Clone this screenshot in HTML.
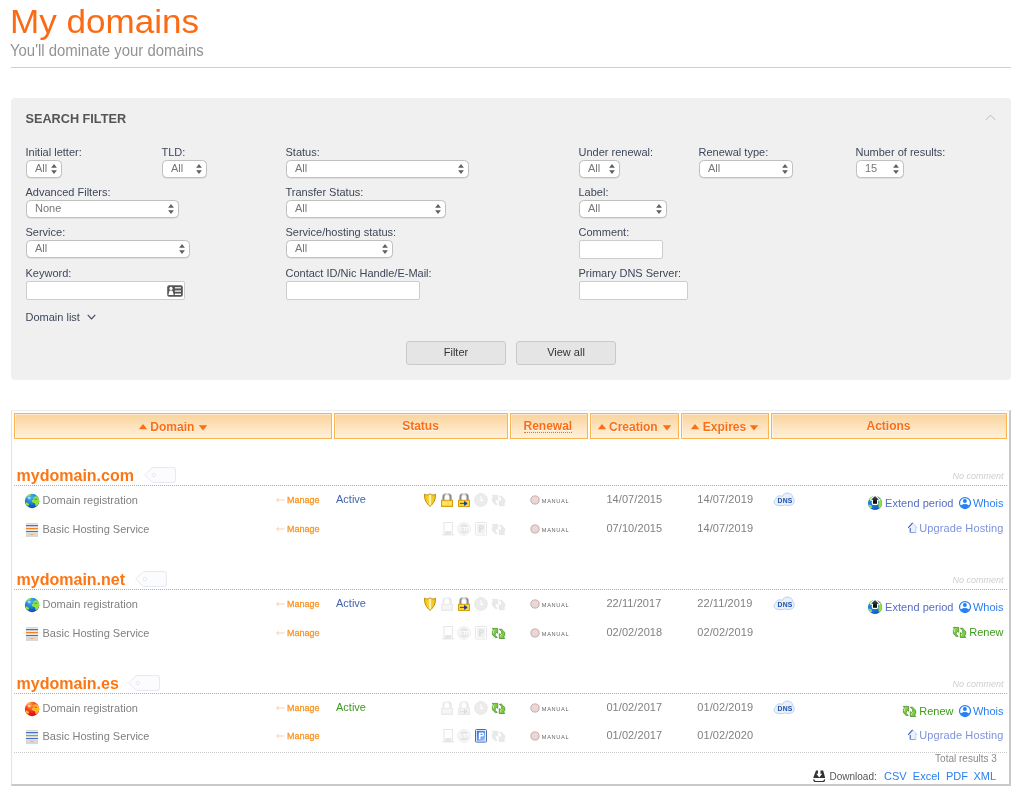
<!DOCTYPE html>
<html lang="en"><head><meta charset="utf-8"><title>My domains</title>
<style>
html,body{margin:0;padding:0;background:#fff;}
body{width:1021px;height:801px;position:relative;overflow:hidden;font-family:"Liberation Sans",sans-serif;color:#808080;}
#page{position:absolute;left:0;top:0;width:1021px;height:801px;will-change:transform;}
.t{position:absolute;white-space:nowrap;}
.abs{position:absolute;}
h2.t,h3.t,p.t{margin:0;}
em.t{font-style:italic;}
a.t{text-decoration:none;cursor:pointer;}
button.btn{padding:0 0 2px;height:20px;margin:0;box-sizing:content-box;font-family:inherit;-webkit-appearance:none;appearance:none;}
h1.t{margin:0;font-weight:normal;color:#fb6b15;}
.sub{color:#939393;}
.hr{position:absolute;left:11px;top:67px;width:1000px;height:1px;background:#cfcfcf;}
.panel{position:absolute;left:11px;top:98px;width:1000px;height:282px;background:#f0f0f0;border-radius:4px;}
.ptitle{font-weight:bold;color:#555;}
.lab{color:#3e4759;}
.sel{position:absolute;height:16px;border:1px solid #c0c0c0;border-radius:4.5px;box-shadow:0 0.5px 0.5px rgba(0,0,0,.12);background:#fff;box-sizing:content-box;}
.sel span{position:absolute;left:8px;top:1px;font-size:11px;line-height:12px;color:#777;}
.sel svg{position:absolute;right:3.8px;top:3.2px;}
.inp{position:absolute;height:17px;border:1px solid #cdcdcd;border-radius:2px;background:#fff;}
.btn{position:absolute;top:341px;width:98px;height:22px;border:1px solid #cacaca;border-radius:3px;background:#e5e5e5;color:#333;font-size:11px;line-height:20px;text-align:center;}
.tbl{position:absolute;left:11px;top:410px;width:997px;height:373px;border-top:1px solid #ececec;border-left:1px solid #e4e4e4;border-right:2px solid #c9c9c9;border-bottom:2px solid #c9c9c9;}
.th{position:absolute;top:413px;height:24px;border:1px solid #fbb451;background:linear-gradient(#fad39c,#fff1da);box-shadow:inset 1px 1px 0 rgba(255,255,255,.45);}
.tht{font-weight:bold;color:#fb6e16;text-shadow:0 1px 0 rgba(255,255,255,.85);}
.dom{font-weight:bold;color:#fc7614;}
.dot{position:absolute;left:14px;width:993px;height:0;border-top:1px dotted #f9a01e;}
.gdot{position:absolute;left:14px;width:993px;height:0;border-top:1px dotted #c8c8c8;}
.man{color:#fb9426;}
.nocom{font-style:italic;color:#cfcfcf;}
.act1{color:#566cc2;letter-spacing:0.04px;}
.act2{color:#2a80f0;}
.act3{color:#7d92dc;letter-spacing:0.12px;}
.grn{color:#3d9a1e;}
.blue{color:#4464ab;}

</style></head>
<body>
<div id="page">
<h1 class="t" style="left:10.2px;top:4.00px;font-size:34px;line-height:34px;transform-origin:0 0;transform:scaleX(1.032);">My domains</h1>
<p class="t sub" style="left:9.9px;top:43.00px;font-size:16px;line-height:16px;transform-origin:0 0;transform:scaleX(0.932);">You'll dominate your domains</p>
<div class="hr"></div>
<div class="panel"></div>
<h3 class="t ptitle" style="left:25.5px;top:113.00px;font-size:12.7px;line-height:12.7px;">SEARCH FILTER</h3>
<svg class="abs" style="left:985px;top:114px" width="11" height="7" viewBox="0 0 11 7"><path d="M0.8 6 L5.5 1.2 L10.2 6" fill="none" stroke="#bdbdbd" stroke-width="1"/></svg>
<label class="t lab" style="left:25.5px;top:147.00px;font-size:11px;line-height:11px;">Initial letter:</label>
<div class="sel" style="left:26px;top:160px;width:34px;"><span>All</span><svg width="6" height="10" viewBox="0 0 6 10"><path d="M3 0 L5.9 3.8 H0.1 Z M3 10 L5.9 6.2 H0.1 Z" fill="#606060"/></svg></div>
<label class="t lab" style="left:161.5px;top:147.00px;font-size:11px;line-height:11px;">TLD:</label>
<div class="sel" style="left:162px;top:160px;width:43px;"><span>All</span><svg width="6" height="10" viewBox="0 0 6 10"><path d="M3 0 L5.9 3.8 H0.1 Z M3 10 L5.9 6.2 H0.1 Z" fill="#606060"/></svg></div>
<label class="t lab" style="left:285.5px;top:147.00px;font-size:11px;line-height:11px;">Status:</label>
<div class="sel" style="left:286px;top:160px;width:181px;"><span>All</span><svg width="6" height="10" viewBox="0 0 6 10"><path d="M3 0 L5.9 3.8 H0.1 Z M3 10 L5.9 6.2 H0.1 Z" fill="#606060"/></svg></div>
<label class="t lab" style="left:578.5px;top:147.00px;font-size:11px;line-height:11px;">Under renewal:</label>
<div class="sel" style="left:579px;top:160px;width:39px;"><span>All</span><svg width="6" height="10" viewBox="0 0 6 10"><path d="M3 0 L5.9 3.8 H0.1 Z M3 10 L5.9 6.2 H0.1 Z" fill="#606060"/></svg></div>
<label class="t lab" style="left:698.5px;top:147.00px;font-size:11px;line-height:11px;">Renewal type:</label>
<div class="sel" style="left:699px;top:160px;width:92px;"><span>All</span><svg width="6" height="10" viewBox="0 0 6 10"><path d="M3 0 L5.9 3.8 H0.1 Z M3 10 L5.9 6.2 H0.1 Z" fill="#606060"/></svg></div>
<label class="t lab" style="left:855.5px;top:147.00px;font-size:11px;line-height:11px;">Number of results:</label>
<div class="sel" style="left:856px;top:160px;width:46px;"><span>15</span><svg width="6" height="10" viewBox="0 0 6 10"><path d="M3 0 L5.9 3.8 H0.1 Z M3 10 L5.9 6.2 H0.1 Z" fill="#606060"/></svg></div>
<label class="t lab" style="left:25.5px;top:187.00px;font-size:11px;line-height:11px;">Advanced Filters:</label>
<div class="sel" style="left:26px;top:200px;width:151px;"><span>None</span><svg width="6" height="10" viewBox="0 0 6 10"><path d="M3 0 L5.9 3.8 H0.1 Z M3 10 L5.9 6.2 H0.1 Z" fill="#606060"/></svg></div>
<label class="t lab" style="left:285.5px;top:187.00px;font-size:11px;line-height:11px;">Transfer Status:</label>
<div class="sel" style="left:286px;top:200px;width:158px;"><span>All</span><svg width="6" height="10" viewBox="0 0 6 10"><path d="M3 0 L5.9 3.8 H0.1 Z M3 10 L5.9 6.2 H0.1 Z" fill="#606060"/></svg></div>
<label class="t lab" style="left:578.5px;top:187.00px;font-size:11px;line-height:11px;">Label:</label>
<div class="sel" style="left:579px;top:200px;width:86px;"><span>All</span><svg width="6" height="10" viewBox="0 0 6 10"><path d="M3 0 L5.9 3.8 H0.1 Z M3 10 L5.9 6.2 H0.1 Z" fill="#606060"/></svg></div>
<label class="t lab" style="left:25.5px;top:227.00px;font-size:11px;line-height:11px;">Service:</label>
<div class="sel" style="left:26px;top:240px;width:162px;"><span>All</span><svg width="6" height="10" viewBox="0 0 6 10"><path d="M3 0 L5.9 3.8 H0.1 Z M3 10 L5.9 6.2 H0.1 Z" fill="#606060"/></svg></div>
<label class="t lab" style="left:285.5px;top:227.00px;font-size:11px;line-height:11px;">Service/hosting status:</label>
<div class="sel" style="left:286px;top:240px;width:105px;"><span>All</span><svg width="6" height="10" viewBox="0 0 6 10"><path d="M3 0 L5.9 3.8 H0.1 Z M3 10 L5.9 6.2 H0.1 Z" fill="#606060"/></svg></div>
<label class="t lab" style="left:578.5px;top:227.00px;font-size:11px;line-height:11px;">Comment:</label>
<div class="inp" style="left:579px;top:240px;width:82px;"></div>
<label class="t lab" style="left:25.5px;top:268.00px;font-size:11px;line-height:11px;">Keyword:</label>
<div class="inp" style="left:26px;top:281px;width:157px;"></div>
<label class="t lab" style="left:285.5px;top:268.00px;font-size:11px;line-height:11px;">Contact ID/Nic Handle/E-Mail:</label>
<div class="inp" style="left:286px;top:281px;width:132px;"></div>
<label class="t lab" style="left:578.5px;top:268.00px;font-size:11px;line-height:11px;">Primary DNS Server:</label>
<div class="inp" style="left:579px;top:281px;width:107px;"></div>
<svg class="abs" style="left:167px;top:285px" width="16" height="12" viewBox="0 0 16 12"><rect x="0.2" y="0.2" width="15.6" height="11.6" rx="2" fill="#555"/><rect x="7.9" y="2.2" width="6.1" height="1.2" fill="#fff"/><rect x="7.9" y="5.2" width="6.1" height="1.8" fill="#cfcfcf"/><rect x="7.9" y="8.6" width="6.1" height="1.4" fill="#fff"/><circle cx="4" cy="3.4" r="1.6" fill="#fff"/><path d="M1.4 9.9 L2.2 6.4 Q2.4 5.4 3.4 5.4 H4.6 Q5.6 5.4 5.8 6.4 L6.7 9.9 Z" fill="#fff"/></svg>
<label class="t lab" style="left:25.5px;top:312.00px;font-size:11px;line-height:11px;">Domain list</label>
<svg class="abs" style="left:87px;top:314px" width="9" height="6" viewBox="0 0 9 6"><path d="M0.7 0.8 L4.5 4.9 L8.3 0.8" fill="none" stroke="#3e4759" stroke-width="1.1"/></svg>
<button type="button" class="btn" style="left:406px;">Filter</button>
<button type="button" class="btn" style="left:516px;">View all</button>
<div class="tbl"></div>
<div class="th" style="left:14px;width:316px;"></div>
<div class="th" style="left:334px;width:172px;"></div>
<div class="th" style="left:510px;width:76px;"></div>
<div class="th" style="left:590px;width:87px;"></div>
<div class="th" style="left:681px;width:86px;"></div>
<div class="th" style="left:771px;width:234px;"></div>
<svg class="abs" style="left:138.5px;top:424px;overflow:visible" width="8" height="6" viewBox="0 0 8 6"><path d="M4 0 L8.2 5.3 H-0.2 Z" fill="#fb6e16"/></svg>
<span class="t tht" style="left:150.3px;top:421.00px;font-size:12px;line-height:12px;">Domain</span>
<svg class="abs" style="left:198.6px;top:425px;overflow:visible" width="8" height="6" viewBox="0 0 8 6"><path d="M4 5.6 L8.2 0.3 H-0.2 Z" fill="#fb6e16"/></svg>
<span class="t tht" style="left:402.2px;top:420.00px;font-size:12px;line-height:12px;">Status</span>
<span class="t tht" style="left:523.5px;top:420.00px;font-size:12px;line-height:12px;border-bottom:1px dotted #fb6e16;padding-bottom:0px;">Renewal</span>
<svg class="abs" style="left:597.5px;top:424px;overflow:visible" width="8" height="6" viewBox="0 0 8 6"><path d="M4 0 L8.2 5.3 H-0.2 Z" fill="#fb6e16"/></svg>
<span class="t tht" style="left:609px;top:421.00px;font-size:12px;line-height:12px;">Creation</span>
<svg class="abs" style="left:662.8px;top:425px;overflow:visible" width="8" height="6" viewBox="0 0 8 6"><path d="M4 5.6 L8.2 0.3 H-0.2 Z" fill="#fb6e16"/></svg>
<svg class="abs" style="left:690.8px;top:424px;overflow:visible" width="8" height="6" viewBox="0 0 8 6"><path d="M4 0 L8.2 5.3 H-0.2 Z" fill="#fb6e16"/></svg>
<span class="t tht" style="left:702.8px;top:421.00px;font-size:12px;line-height:12px;">Expires</span>
<svg class="abs" style="left:750px;top:425px;overflow:visible" width="8" height="6" viewBox="0 0 8 6"><path d="M4 5.6 L8.2 0.3 H-0.2 Z" fill="#fb6e16"/></svg>
<span class="t tht" style="left:866.5px;top:420.00px;font-size:12px;line-height:12px;">Actions</span>
<h2 class="t dom" style="left:16.6px;top:468.00px;font-size:16px;line-height:16px;">mydomain.com</h2>
<div class="dot" style="top:485px"></div>
<em class="t nocom" style="right:17.5px;top:472.00px;font-size:9px;line-height:9px;">No comment</em>
<h2 class="t dom" style="left:16.6px;top:572.00px;font-size:16px;line-height:16px;">mydomain.net</h2>
<div class="dot" style="top:589px"></div>
<em class="t nocom" style="right:17.5px;top:576.00px;font-size:9px;line-height:9px;">No comment</em>
<h2 class="t dom" style="left:16.6px;top:676.00px;font-size:16px;line-height:16px;">mydomain.es</h2>
<div class="dot" style="top:693px"></div>
<em class="t nocom" style="right:17.5px;top:680.00px;font-size:9px;line-height:9px;">No comment</em>
<div class="t " style="left:42.5px;top:495.00px;font-size:11px;line-height:11px;">Domain registration</div>
<div class="t " style="left:42.5px;top:524.00px;font-size:11px;line-height:11px;">Basic Hosting Service</div>
<a class="t man" style="left:286.6px;top:495.00px;font-size:9.5px;line-height:9.5px;transform-origin:0 0;transform:scaleX(0.95);-webkit-text-stroke:0.3px #fb9426;">Manage</a>
<svg class="abs" style="left:275.5px;top:496.5px" width="9" height="6" viewBox="0 0 9 6"><path d="M0.6 3 H8.5 M2.8 1 L0.7 3 L2.8 5" fill="none" stroke="#fbc594" stroke-width="0.8"/></svg>
<a class="t man" style="left:286.6px;top:524.00px;font-size:9.5px;line-height:9.5px;transform-origin:0 0;transform:scaleX(0.95);-webkit-text-stroke:0.3px #fb9426;">Manage</a>
<svg class="abs" style="left:275.5px;top:525.5px" width="9" height="6" viewBox="0 0 9 6"><path d="M0.6 3 H8.5 M2.8 1 L0.7 3 L2.8 5" fill="none" stroke="#fbc594" stroke-width="0.8"/></svg>
<div class="t " style="left:541.8px;top:499.00px;font-size:5.6px;line-height:5.6px;color:#666;letter-spacing:0.7px;">MANUAL</div>
<div class="t " style="left:541.8px;top:528.00px;font-size:5.6px;line-height:5.6px;color:#666;letter-spacing:0.7px;">MANUAL</div>
<div class="t " style="left:42.5px;top:599.00px;font-size:11px;line-height:11px;">Domain registration</div>
<div class="t " style="left:42.5px;top:628.00px;font-size:11px;line-height:11px;">Basic Hosting Service</div>
<a class="t man" style="left:286.6px;top:599.00px;font-size:9.5px;line-height:9.5px;transform-origin:0 0;transform:scaleX(0.95);-webkit-text-stroke:0.3px #fb9426;">Manage</a>
<svg class="abs" style="left:275.5px;top:600.5px" width="9" height="6" viewBox="0 0 9 6"><path d="M0.6 3 H8.5 M2.8 1 L0.7 3 L2.8 5" fill="none" stroke="#fbc594" stroke-width="0.8"/></svg>
<a class="t man" style="left:286.6px;top:628.00px;font-size:9.5px;line-height:9.5px;transform-origin:0 0;transform:scaleX(0.95);-webkit-text-stroke:0.3px #fb9426;">Manage</a>
<svg class="abs" style="left:275.5px;top:629.5px" width="9" height="6" viewBox="0 0 9 6"><path d="M0.6 3 H8.5 M2.8 1 L0.7 3 L2.8 5" fill="none" stroke="#fbc594" stroke-width="0.8"/></svg>
<div class="t " style="left:541.8px;top:603.00px;font-size:5.6px;line-height:5.6px;color:#666;letter-spacing:0.7px;">MANUAL</div>
<div class="t " style="left:541.8px;top:632.00px;font-size:5.6px;line-height:5.6px;color:#666;letter-spacing:0.7px;">MANUAL</div>
<div class="t " style="left:42.5px;top:703.00px;font-size:11px;line-height:11px;">Domain registration</div>
<div class="t " style="left:42.5px;top:731.00px;font-size:11px;line-height:11px;">Basic Hosting Service</div>
<a class="t man" style="left:286.6px;top:703.00px;font-size:9.5px;line-height:9.5px;transform-origin:0 0;transform:scaleX(0.95);-webkit-text-stroke:0.3px #fb9426;">Manage</a>
<svg class="abs" style="left:275.5px;top:704.5px" width="9" height="6" viewBox="0 0 9 6"><path d="M0.6 3 H8.5 M2.8 1 L0.7 3 L2.8 5" fill="none" stroke="#fbc594" stroke-width="0.8"/></svg>
<a class="t man" style="left:286.6px;top:731.00px;font-size:9.5px;line-height:9.5px;transform-origin:0 0;transform:scaleX(0.95);-webkit-text-stroke:0.3px #fb9426;">Manage</a>
<svg class="abs" style="left:275.5px;top:732.5px" width="9" height="6" viewBox="0 0 9 6"><path d="M0.6 3 H8.5 M2.8 1 L0.7 3 L2.8 5" fill="none" stroke="#fbc594" stroke-width="0.8"/></svg>
<div class="t " style="left:541.8px;top:707.00px;font-size:5.6px;line-height:5.6px;color:#666;letter-spacing:0.7px;">MANUAL</div>
<div class="t " style="left:541.8px;top:735.00px;font-size:5.6px;line-height:5.6px;color:#666;letter-spacing:0.7px;">MANUAL</div>
<div class="t " style="left:606.4px;top:494.00px;font-size:11px;line-height:11px;letter-spacing:0.08px;">14/07/2015</div>
<div class="t " style="left:697.3px;top:494.00px;font-size:11px;line-height:11px;letter-spacing:0.08px;">14/07/2019</div>
<div class="t " style="left:606.4px;top:523.00px;font-size:11px;line-height:11px;letter-spacing:0.08px;">07/10/2015</div>
<div class="t " style="left:697.3px;top:523.00px;font-size:11px;line-height:11px;letter-spacing:0.08px;">14/07/2019</div>
<div class="t " style="left:606.4px;top:598.00px;font-size:11px;line-height:11px;letter-spacing:0.08px;">22/11/2017</div>
<div class="t " style="left:697.3px;top:598.00px;font-size:11px;line-height:11px;letter-spacing:0.08px;">22/11/2019</div>
<div class="t " style="left:606.4px;top:627.00px;font-size:11px;line-height:11px;letter-spacing:0.08px;">02/02/2018</div>
<div class="t " style="left:697.3px;top:627.00px;font-size:11px;line-height:11px;letter-spacing:0.08px;">02/02/2019</div>
<div class="t " style="left:606.4px;top:702.00px;font-size:11px;line-height:11px;letter-spacing:0.08px;">01/02/2017</div>
<div class="t " style="left:697.3px;top:702.00px;font-size:11px;line-height:11px;letter-spacing:0.08px;">01/02/2019</div>
<div class="t " style="left:606.4px;top:730.00px;font-size:11px;line-height:11px;letter-spacing:0.08px;">01/02/2017</div>
<div class="t " style="left:697.3px;top:730.00px;font-size:11px;line-height:11px;letter-spacing:0.08px;">01/02/2020</div>
<div class="t blue" style="left:336px;top:494.00px;font-size:11px;line-height:11px;">Active</div>
<div class="t blue" style="left:336px;top:598.00px;font-size:11px;line-height:11px;">Active</div>
<div class="t grn" style="left:336px;top:702.00px;font-size:11px;line-height:11px;">Active</div>
<a class="t act2" style="right:17.5px;top:498.00px;font-size:11px;line-height:11px;">Whois</a>
<a class="t act1" style="right:67.5px;top:498.00px;font-size:11px;line-height:11px;">Extend period</a>
<a class="t act3" style="right:17.5px;top:523.00px;font-size:11px;line-height:11px;">Upgrade Hosting</a>
<a class="t act2" style="right:17.5px;top:602.00px;font-size:11px;line-height:11px;">Whois</a>
<a class="t act1" style="right:67.5px;top:602.00px;font-size:11px;line-height:11px;">Extend period</a>
<a class="t grn" style="right:17.5px;top:627.00px;font-size:11px;line-height:11px;">Renew</a>
<a class="t act2" style="right:17.5px;top:706.00px;font-size:11px;line-height:11px;">Whois</a>
<a class="t grn" style="right:67.5px;top:706.00px;font-size:11px;line-height:11px;">Renew</a>
<a class="t act3" style="right:17.5px;top:730.00px;font-size:11px;line-height:11px;">Upgrade Hosting</a>
<div class="gdot" style="top:752px"></div>
<div class="t " style="right:24.200000000000045px;top:754.00px;font-size:10px;line-height:10px;color:#8a8a8a;">Total results 3</div>
<div class="t " style="left:829.5px;top:772.00px;font-size:10px;line-height:10px;color:#555;">Download:</div>
<a class="t act2" style="left:884px;top:771.00px;font-size:11px;line-height:11px;">CSV</a>
<a class="t act2" style="left:912.8px;top:771.00px;font-size:11px;line-height:11px;">Excel</a>
<a class="t act2" style="left:946px;top:771.00px;font-size:11px;line-height:11px;">PDF</a>
<a class="t act2" style="left:973.5px;top:771.00px;font-size:11px;line-height:11px;">XML</a>
<svg class="abs" style="left:144px;top:467px" width="32" height="16" viewBox="0 0 32 16"><path d="M0.6 8 L8.4 0.6 H30 Q31.4 0.6 31.4 2 V14 Q31.4 15.4 30 15.4 H8.4 Z" fill="#fcfcfe" stroke="#e5e9f2" stroke-width="1"/><circle cx="9.9" cy="8" r="1.7" fill="#fff" stroke="#e5e9f2" stroke-width="1"/></svg>
<svg class="abs" style="left:134.9px;top:571px" width="32" height="16" viewBox="0 0 32 16"><path d="M0.6 8 L8.4 0.6 H30 Q31.4 0.6 31.4 2 V14 Q31.4 15.4 30 15.4 H8.4 Z" fill="#fcfcfe" stroke="#e5e9f2" stroke-width="1"/><circle cx="9.9" cy="8" r="1.7" fill="#fff" stroke="#e5e9f2" stroke-width="1"/></svg>
<svg class="abs" style="left:127.9px;top:675px" width="32" height="16" viewBox="0 0 32 16"><path d="M0.6 8 L8.4 0.6 H30 Q31.4 0.6 31.4 2 V14 Q31.4 15.4 30 15.4 H8.4 Z" fill="#fcfcfe" stroke="#e5e9f2" stroke-width="1"/><circle cx="9.9" cy="8" r="1.7" fill="#fff" stroke="#e5e9f2" stroke-width="1"/></svg>
<svg class="abs" style="left:22px;top:490px" width="20" height="22" viewBox="0 0 20 22"><defs><radialGradient id="g1" cx="0.42" cy="0.25" r="0.85"><stop offset="0" stop-color="#48b0f5"/><stop offset="0.5" stop-color="#1b7fd8"/><stop offset="1" stop-color="#0b349a"/></radialGradient>
<radialGradient id="g2" cx="0.5" cy="0.5" r="0.5"><stop offset="0" stop-color="#fff" stop-opacity="0.85"/><stop offset="1" stop-color="#fff" stop-opacity="0"/></radialGradient>
<clipPath id="g3"><circle cx="10.1" cy="11" r="7.2"/></clipPath></defs>
<circle cx="10.1" cy="11" r="7.2" fill="url(#g1)"/>
<g clip-path="url(#g3)" fill="#8ee23c">
<path d="M5.2 4.2 C6.5 3.6 8.6 3.6 9.3 4.6 C9.4 5.6 8 6.3 6.6 6.3 C5.6 6.8 4.6 7.4 3.8 8.6 L2.6 9.8 L2.4 7 Z"/>
<path d="M11.8 7 C12.6 6 14.8 6 16.2 6.8 C17.2 8.2 17.8 10 17.6 12.6 C17 13.4 16.4 13.6 16.2 14.6 C15.6 15.8 14.6 16.2 13.6 16 C13.2 14.8 13.4 13.8 12.8 13.2 C11.6 13 10.4 12.6 9.8 11.6 C9.6 10.6 10.4 9.8 11.4 9.4 C11.2 8.4 11.2 7.6 11.8 7 Z"/>
<path d="M3.8 12.4 C4.8 12.2 5.8 13.2 6.8 13.8 C7.4 14.6 7 15.6 6.2 15.8 C5.4 15.6 4.4 15 3.8 14.2 Z"/>
<ellipse cx="13.8" cy="9.3" rx="1.5" ry="0.6" fill="#2a90e0" transform="rotate(12 13.8 9.3)"/>
</g>
<circle cx="7.1" cy="8" r="2.1" fill="url(#g2)"/></svg>
<svg class="abs" style="left:26px;top:523px" width="12" height="14" viewBox="0 0 12 14"><rect x="0" y="0" width="12" height="14" fill="#e6e9ec"/><rect x="0" y="0" width="12" height="1.1" fill="#d6d6d6"/><rect x="0" y="1.1" width="12" height="0.7" fill="#f1ebe0"/>
<rect x="0" y="2" width="12" height="1.2" fill="#3b73c6"/><rect x="0" y="5" width="12" height="1.2" fill="#f5811e"/><rect x="0" y="8" width="12" height="1.2" fill="#3b73c6"/>
<rect x="0" y="9.4" width="12" height="0.7" fill="#f1ebe0"/><rect x="0" y="10" width="12" height="4" fill="#d8d8d8"/><rect x="4.9" y="11" width="2.1" height="1.1" rx="0.5" fill="#f5a04a"/></svg>
<svg class="abs" style="left:529.6px;top:495.3px" width="10" height="10" viewBox="0 0 10 10"><defs><linearGradient id="g4" x1="0" y1="0" x2="0" y2="1"><stop offset="0" stop-color="#f8d4d4"/><stop offset="1" stop-color="#dddada"/></linearGradient></defs><circle cx="5" cy="5" r="4.1" fill="url(#g4)" stroke="#c4a3a3" stroke-width="0.9"/></svg>
<svg class="abs" style="left:529.6px;top:524.1px" width="10" height="10" viewBox="0 0 10 10"><defs><linearGradient id="g5" x1="0" y1="0" x2="0" y2="1"><stop offset="0" stop-color="#f8d4d4"/><stop offset="1" stop-color="#dddada"/></linearGradient></defs><circle cx="5" cy="5" r="4.1" fill="url(#g5)" stroke="#c4a3a3" stroke-width="0.9"/></svg>
<svg class="abs" style="left:773.2px;top:492.4px" width="23" height="15" viewBox="0 0 23 15"><defs><filter id="g6" x="-10%" y="-10%" width="120%" height="120%"><feGaussianBlur stdDeviation="0.35"/></filter></defs>
<path d="M4.8 13.2 C0.6 13.4 0 8.6 2.6 7.4 C2.8 4 7 2.8 9.4 4.6 C10.6 -0.2 19 -0.4 20 5.6 C22 7 21.8 12.4 18.4 13 C16 13.8 13.6 13.6 12.4 12.8 C10.4 14 7 14 4.8 13.2 Z" fill="#e9f0fb" stroke="#bdd0ee" stroke-width="1" filter="url(#g6)"/>
<text x="12.1" y="10.7" font-family="Liberation Sans, sans-serif" font-size="6.8" font-weight="bold" fill="#1c4fa8" text-anchor="middle" letter-spacing="0.2">DNS</text></svg>
<svg class="abs" style="left:424px;top:493px" width="12" height="14" viewBox="0 0 12 14"><defs><linearGradient id="g7" x1="0" x2="1" y1="0" y2="0"><stop offset="0" stop-color="#f3c31a"/><stop offset="0.42" stop-color="#fbd929"/><stop offset="0.47" stop-color="#fff5b8"/><stop offset="0.56" stop-color="#fff5b8"/><stop offset="0.6" stop-color="#f7d128"/><stop offset="1" stop-color="#f0c224"/></linearGradient></defs>
<path d="M6 0.5 C5.2 1.6 3.6 2.1 2.6 1.9 C1.8 1.7 1.1 1.4 0.6 1.1 C0.5 3.6 0.7 6 1.7 8 C2.7 10.1 4.4 12.2 6 13.4 C7.6 12.2 9.3 10.1 10.3 8 C11.3 6 11.5 3.6 11.4 1.1 C10.9 1.4 10.2 1.7 9.4 1.9 C8.4 2.1 6.8 1.6 6 0.5 Z" fill="url(#g7)" stroke="#bd8711" stroke-width="1"/></svg>
<svg class="abs" style="left:441px;top:493px" width="12" height="14" viewBox="0 0 12 14"><defs><linearGradient id="g8" x1="0" x2="1"><stop offset="0" stop-color="#8e8e8e"/><stop offset="0.5" stop-color="#e9e9e9"/><stop offset="1" stop-color="#8a8a8a"/></linearGradient>
<linearGradient id="g9" x1="0" x2="0" y1="0" y2="1"><stop offset="0" stop-color="#fce24e"/><stop offset="1" stop-color="#f6cf2a"/></linearGradient></defs>
<path d="M2.5 7.4 V3.8 C2.5 0.3 9.5 0.3 9.5 3.8 V7.4" fill="none" stroke="url(#g8)" stroke-width="2.3"/>
<rect x="0.5" y="7.3" width="11" height="6.2" fill="url(#g9)" stroke="#d79f12" stroke-width="1"/><rect x="1.6" y="9.2" width="8.8" height="2.6" fill="#fff0a0" opacity="0.55"/><rect x="6.6" y="9.2" width="1" height="2.6" fill="#d79f12" opacity="0.35"/></svg>
<svg class="abs" style="left:458px;top:493px" width="12" height="14" viewBox="0 0 12 14"><defs><linearGradient id="g10" x1="0" x2="1"><stop offset="0" stop-color="#8e8e8e"/><stop offset="0.5" stop-color="#e9e9e9"/><stop offset="1" stop-color="#8a8a8a"/></linearGradient>
<linearGradient id="g11" x1="0" x2="0" y1="0" y2="1"><stop offset="0" stop-color="#fce24e"/><stop offset="1" stop-color="#f6cf2a"/></linearGradient></defs>
<path d="M2.5 7.4 V3.8 C2.5 0.3 9.5 0.3 9.5 3.8 V7.4" fill="none" stroke="url(#g10)" stroke-width="2.3"/>
<rect x="0.5" y="7.3" width="11" height="6.2" fill="url(#g11)" stroke="#d79f12" stroke-width="1"/><path d="M1.9 10.4 H8 M6.5 8.5 L9.2 10.4 L6.5 12.3 Z" stroke="#173a9e" stroke-width="0.9" fill="#173a9e" stroke-linejoin="miter"/></svg>
<svg class="abs" style="left:474px;top:493px" width="14" height="14" viewBox="0 0 14 14"><circle cx="7" cy="7" r="6.4" fill="#ececec" stroke="#e4e4e4" stroke-width="0.8"/><path d="M7 3.2 V7.4 H9.6" fill="none" stroke="#fff" stroke-width="1.3"/></svg>
<svg class="abs" style="left:488px;top:490px" width="22" height="20" viewBox="0 0 22 20"><g fill="#e9e9e9" stroke="#e3e3e3" stroke-width="0.7" stroke-linejoin="round">
<path d="M4.4 5.4 H9.7 V10.3 L8.7 9.5 L7.1 11 V12.2 L8.3 13.6 L9.3 14.4 L7.4 14.6 L5.5 12.9 L4.4 11.3 V8.4 L5.7 6.5 L4.4 6 Z"/>
<path d="M11.3 6.3 L13.5 6.2 L15.3 7.9 L16.7 9.5 V12.5 L15.7 13.9 L16.7 15.5 H11.3 V10.6 L12.3 11.4 L13.7 10.2 V8.8 L12.6 7.3 Z"/></g></svg>
<svg class="abs" style="left:441.7px;top:522px" width="13" height="14" viewBox="0 0 13 14"><rect x="2" y="0.5" width="8.4" height="12" fill="#fff" stroke="#e6e6e6" stroke-width="1"/><rect x="3.2" y="9" width="6" height="3.2" fill="#e6e6e6"/><rect x="0.4" y="12.2" width="11.6" height="1.2" fill="#e6e6e6"/></svg>
<svg class="abs" style="left:457px;top:522px" width="14" height="14" viewBox="0 0 14 14"><circle cx="7" cy="7" r="6.3" fill="#fff" stroke="#e9e9e9" stroke-width="1"/><circle cx="7" cy="7" r="5.1" fill="#e6e6e6"/><text x="7" y="9" font-family="Liberation Sans, sans-serif" font-size="5.6" font-weight="bold" fill="#fff" text-anchor="middle" letter-spacing="-0.2">STP</text></svg>
<svg class="abs" style="left:475px;top:522px" width="12" height="14" viewBox="0 0 12 14"><rect x="0.5" y="0.5" width="11" height="12.6" rx="0.8" fill="#fff" stroke="#e7e7e7"/><rect x="2" y="2" width="8" height="9.6" fill="#f1f1f1"/><path d="M4 3.6 H7.4 C9.4 3.6 9.4 7.2 7.4 7.2 H5.6 V10 H4 Z M5.6 4.8 V6 H7 C7.7 6 7.7 4.8 7 4.8 Z" fill="#dedede" fill-rule="evenodd"/></svg>
<svg class="abs" style="left:488px;top:519.2px" width="22" height="20" viewBox="0 0 22 20"><g fill="#e9e9e9" stroke="#e3e3e3" stroke-width="0.7" stroke-linejoin="round">
<path d="M4.4 5.4 H9.7 V10.3 L8.7 9.5 L7.1 11 V12.2 L8.3 13.6 L9.3 14.4 L7.4 14.6 L5.5 12.9 L4.4 11.3 V8.4 L5.7 6.5 L4.4 6 Z"/>
<path d="M11.3 6.3 L13.5 6.2 L15.3 7.9 L16.7 9.5 V12.5 L15.7 13.9 L16.7 15.5 H11.3 V10.6 L12.3 11.4 L13.7 10.2 V8.8 L12.6 7.3 Z"/></g></svg>
<svg class="abs" style="left:22px;top:594px" width="20" height="22" viewBox="0 0 20 22"><defs><radialGradient id="g13" cx="0.42" cy="0.25" r="0.85"><stop offset="0" stop-color="#48b0f5"/><stop offset="0.5" stop-color="#1b7fd8"/><stop offset="1" stop-color="#0b349a"/></radialGradient>
<radialGradient id="g14" cx="0.5" cy="0.5" r="0.5"><stop offset="0" stop-color="#fff" stop-opacity="0.85"/><stop offset="1" stop-color="#fff" stop-opacity="0"/></radialGradient>
<clipPath id="g15"><circle cx="10.1" cy="11" r="7.2"/></clipPath></defs>
<circle cx="10.1" cy="11" r="7.2" fill="url(#g13)"/>
<g clip-path="url(#g15)" fill="#8ee23c">
<path d="M5.2 4.2 C6.5 3.6 8.6 3.6 9.3 4.6 C9.4 5.6 8 6.3 6.6 6.3 C5.6 6.8 4.6 7.4 3.8 8.6 L2.6 9.8 L2.4 7 Z"/>
<path d="M11.8 7 C12.6 6 14.8 6 16.2 6.8 C17.2 8.2 17.8 10 17.6 12.6 C17 13.4 16.4 13.6 16.2 14.6 C15.6 15.8 14.6 16.2 13.6 16 C13.2 14.8 13.4 13.8 12.8 13.2 C11.6 13 10.4 12.6 9.8 11.6 C9.6 10.6 10.4 9.8 11.4 9.4 C11.2 8.4 11.2 7.6 11.8 7 Z"/>
<path d="M3.8 12.4 C4.8 12.2 5.8 13.2 6.8 13.8 C7.4 14.6 7 15.6 6.2 15.8 C5.4 15.6 4.4 15 3.8 14.2 Z"/>
<ellipse cx="13.8" cy="9.3" rx="1.5" ry="0.6" fill="#2a90e0" transform="rotate(12 13.8 9.3)"/>
</g>
<circle cx="7.1" cy="8" r="2.1" fill="url(#g14)"/></svg>
<svg class="abs" style="left:26px;top:627px" width="12" height="14" viewBox="0 0 12 14"><rect x="0" y="0" width="12" height="14" fill="#e6e9ec"/><rect x="0" y="0" width="12" height="1.1" fill="#d6d6d6"/><rect x="0" y="1.1" width="12" height="0.7" fill="#f1ebe0"/>
<rect x="0" y="2" width="12" height="1.2" fill="#3b73c6"/><rect x="0" y="5" width="12" height="1.2" fill="#f5811e"/><rect x="0" y="8" width="12" height="1.2" fill="#3b73c6"/>
<rect x="0" y="9.4" width="12" height="0.7" fill="#f1ebe0"/><rect x="0" y="10" width="12" height="4" fill="#d8d8d8"/><rect x="4.9" y="11" width="2.1" height="1.1" rx="0.5" fill="#f5a04a"/></svg>
<svg class="abs" style="left:529.6px;top:599.3px" width="10" height="10" viewBox="0 0 10 10"><defs><linearGradient id="g16" x1="0" y1="0" x2="0" y2="1"><stop offset="0" stop-color="#f8d4d4"/><stop offset="1" stop-color="#dddada"/></linearGradient></defs><circle cx="5" cy="5" r="4.1" fill="url(#g16)" stroke="#c4a3a3" stroke-width="0.9"/></svg>
<svg class="abs" style="left:529.6px;top:628.1px" width="10" height="10" viewBox="0 0 10 10"><defs><linearGradient id="g17" x1="0" y1="0" x2="0" y2="1"><stop offset="0" stop-color="#f8d4d4"/><stop offset="1" stop-color="#dddada"/></linearGradient></defs><circle cx="5" cy="5" r="4.1" fill="url(#g17)" stroke="#c4a3a3" stroke-width="0.9"/></svg>
<svg class="abs" style="left:773.2px;top:596.4px" width="23" height="15" viewBox="0 0 23 15"><defs><filter id="g18" x="-10%" y="-10%" width="120%" height="120%"><feGaussianBlur stdDeviation="0.35"/></filter></defs>
<path d="M4.8 13.2 C0.6 13.4 0 8.6 2.6 7.4 C2.8 4 7 2.8 9.4 4.6 C10.6 -0.2 19 -0.4 20 5.6 C22 7 21.8 12.4 18.4 13 C16 13.8 13.6 13.6 12.4 12.8 C10.4 14 7 14 4.8 13.2 Z" fill="#e9f0fb" stroke="#bdd0ee" stroke-width="1" filter="url(#g18)"/>
<text x="12.1" y="10.7" font-family="Liberation Sans, sans-serif" font-size="6.8" font-weight="bold" fill="#1c4fa8" text-anchor="middle" letter-spacing="0.2">DNS</text></svg>
<svg class="abs" style="left:424px;top:597px" width="12" height="14" viewBox="0 0 12 14"><defs><linearGradient id="g19" x1="0" x2="1" y1="0" y2="0"><stop offset="0" stop-color="#f3c31a"/><stop offset="0.42" stop-color="#fbd929"/><stop offset="0.47" stop-color="#fff5b8"/><stop offset="0.56" stop-color="#fff5b8"/><stop offset="0.6" stop-color="#f7d128"/><stop offset="1" stop-color="#f0c224"/></linearGradient></defs>
<path d="M6 0.5 C5.2 1.6 3.6 2.1 2.6 1.9 C1.8 1.7 1.1 1.4 0.6 1.1 C0.5 3.6 0.7 6 1.7 8 C2.7 10.1 4.4 12.2 6 13.4 C7.6 12.2 9.3 10.1 10.3 8 C11.3 6 11.5 3.6 11.4 1.1 C10.9 1.4 10.2 1.7 9.4 1.9 C8.4 2.1 6.8 1.6 6 0.5 Z" fill="url(#g19)" stroke="#bd8711" stroke-width="1"/></svg>
<svg class="abs" style="left:441px;top:597px" width="12" height="14" viewBox="0 0 12 14"><defs><linearGradient id="g20" x1="0" x2="1"><stop offset="0" stop-color="#ececec"/><stop offset="0.5" stop-color="#f4f4f4"/><stop offset="1" stop-color="#e6e6e6"/></linearGradient>
<linearGradient id="g21" x1="0" x2="0" y1="0" y2="1"><stop offset="0" stop-color="#f6f6f6"/><stop offset="1" stop-color="#efefef"/></linearGradient></defs>
<path d="M2.5 7.4 V3.8 C2.5 0.3 9.5 0.3 9.5 3.8 V7.4" fill="none" stroke="url(#g20)" stroke-width="2.3"/>
<rect x="0.5" y="7.3" width="11" height="6.2" fill="url(#g21)" stroke="#e9e9e9" stroke-width="1"/><rect x="1.6" y="9.2" width="8.8" height="2.6" fill="#fafafa" opacity="0.55"/><rect x="6.6" y="9.2" width="1" height="2.6" fill="#e9e9e9" opacity="0.35"/></svg>
<svg class="abs" style="left:458px;top:597px" width="12" height="14" viewBox="0 0 12 14"><defs><linearGradient id="g22" x1="0" x2="1"><stop offset="0" stop-color="#8e8e8e"/><stop offset="0.5" stop-color="#e9e9e9"/><stop offset="1" stop-color="#8a8a8a"/></linearGradient>
<linearGradient id="g23" x1="0" x2="0" y1="0" y2="1"><stop offset="0" stop-color="#fce24e"/><stop offset="1" stop-color="#f6cf2a"/></linearGradient></defs>
<path d="M2.5 7.4 V3.8 C2.5 0.3 9.5 0.3 9.5 3.8 V7.4" fill="none" stroke="url(#g22)" stroke-width="2.3"/>
<rect x="0.5" y="7.3" width="11" height="6.2" fill="url(#g23)" stroke="#d79f12" stroke-width="1"/><path d="M1.9 10.4 H8 M6.5 8.5 L9.2 10.4 L6.5 12.3 Z" stroke="#173a9e" stroke-width="0.9" fill="#173a9e" stroke-linejoin="miter"/></svg>
<svg class="abs" style="left:474px;top:597px" width="14" height="14" viewBox="0 0 14 14"><circle cx="7" cy="7" r="6.4" fill="#ececec" stroke="#e4e4e4" stroke-width="0.8"/><path d="M7 3.2 V7.4 H9.6" fill="none" stroke="#fff" stroke-width="1.3"/></svg>
<svg class="abs" style="left:488px;top:594px" width="22" height="20" viewBox="0 0 22 20"><g fill="#e9e9e9" stroke="#e3e3e3" stroke-width="0.7" stroke-linejoin="round">
<path d="M4.4 5.4 H9.7 V10.3 L8.7 9.5 L7.1 11 V12.2 L8.3 13.6 L9.3 14.4 L7.4 14.6 L5.5 12.9 L4.4 11.3 V8.4 L5.7 6.5 L4.4 6 Z"/>
<path d="M11.3 6.3 L13.5 6.2 L15.3 7.9 L16.7 9.5 V12.5 L15.7 13.9 L16.7 15.5 H11.3 V10.6 L12.3 11.4 L13.7 10.2 V8.8 L12.6 7.3 Z"/></g></svg>
<svg class="abs" style="left:441.7px;top:626px" width="13" height="14" viewBox="0 0 13 14"><rect x="2" y="0.5" width="8.4" height="12" fill="#fff" stroke="#e6e6e6" stroke-width="1"/><rect x="3.2" y="9" width="6" height="3.2" fill="#e6e6e6"/><rect x="0.4" y="12.2" width="11.6" height="1.2" fill="#e6e6e6"/></svg>
<svg class="abs" style="left:457px;top:626px" width="14" height="14" viewBox="0 0 14 14"><circle cx="7" cy="7" r="6.3" fill="#fff" stroke="#e9e9e9" stroke-width="1"/><circle cx="7" cy="7" r="5.1" fill="#e6e6e6"/><text x="7" y="9" font-family="Liberation Sans, sans-serif" font-size="5.6" font-weight="bold" fill="#fff" text-anchor="middle" letter-spacing="-0.2">STP</text></svg>
<svg class="abs" style="left:475px;top:626px" width="12" height="14" viewBox="0 0 12 14"><rect x="0.5" y="0.5" width="11" height="12.6" rx="0.8" fill="#fff" stroke="#e7e7e7"/><rect x="2" y="2" width="8" height="9.6" fill="#f1f1f1"/><path d="M4 3.6 H7.4 C9.4 3.6 9.4 7.2 7.4 7.2 H5.6 V10 H4 Z M5.6 4.8 V6 H7 C7.7 6 7.7 4.8 7 4.8 Z" fill="#dedede" fill-rule="evenodd"/></svg>
<svg class="abs" style="left:488px;top:623.2px" width="22" height="20" viewBox="0 0 22 20"><g fill="#7dca43" stroke="#3c8718" stroke-width="0.7" stroke-linejoin="round">
<path d="M4.4 5.4 H9.7 V10.3 L8.7 9.5 L7.1 11 V12.2 L8.3 13.6 L9.3 14.4 L7.4 14.6 L5.5 12.9 L4.4 11.3 V8.4 L5.7 6.5 L4.4 6 Z"/>
<path d="M11.3 6.3 L13.5 6.2 L15.3 7.9 L16.7 9.5 V12.5 L15.7 13.9 L16.7 15.5 H11.3 V10.6 L12.3 11.4 L13.7 10.2 V8.8 L12.6 7.3 Z"/></g><path d="M6.3 6.6 L5.4 8.4 V10.2" stroke="#d9f5c0" stroke-width="0.9" fill="none"/><path d="M12.6 13.8 V12.4 L13.8 11.4" stroke="#d9f5c0" stroke-width="0.9" fill="none"/></svg>
<svg class="abs" style="left:22px;top:698px" width="20" height="22" viewBox="0 0 20 22"><defs><radialGradient id="g25" cx="0.42" cy="0.25" r="0.85"><stop offset="0" stop-color="#ff9a3a"/><stop offset="0.5" stop-color="#f2301c"/><stop offset="1" stop-color="#c8000c"/></radialGradient>
<radialGradient id="g26" cx="0.5" cy="0.5" r="0.5"><stop offset="0" stop-color="#fff" stop-opacity="0.85"/><stop offset="1" stop-color="#fff" stop-opacity="0"/></radialGradient>
<clipPath id="g27"><circle cx="10.1" cy="11" r="7.2"/></clipPath></defs>
<circle cx="10.1" cy="11" r="7.2" fill="url(#g25)"/>
<g clip-path="url(#g27)" fill="#ffb62e">
<path d="M5.2 4.2 C6.5 3.6 8.6 3.6 9.3 4.6 C9.4 5.6 8 6.3 6.6 6.3 C5.6 6.8 4.6 7.4 3.8 8.6 L2.6 9.8 L2.4 7 Z"/>
<path d="M11.8 7 C12.6 6 14.8 6 16.2 6.8 C17.2 8.2 17.8 10 17.6 12.6 C17 13.4 16.4 13.6 16.2 14.6 C15.6 15.8 14.6 16.2 13.6 16 C13.2 14.8 13.4 13.8 12.8 13.2 C11.6 13 10.4 12.6 9.8 11.6 C9.6 10.6 10.4 9.8 11.4 9.4 C11.2 8.4 11.2 7.6 11.8 7 Z"/>
<path d="M3.8 12.4 C4.8 12.2 5.8 13.2 6.8 13.8 C7.4 14.6 7 15.6 6.2 15.8 C5.4 15.6 4.4 15 3.8 14.2 Z"/>
<ellipse cx="13.8" cy="9.3" rx="1.5" ry="0.6" fill="#f0501c" transform="rotate(12 13.8 9.3)"/>
</g>
<circle cx="7.1" cy="8" r="2.1" fill="url(#g26)"/></svg>
<svg class="abs" style="left:26px;top:730px" width="12" height="14" viewBox="0 0 12 14"><rect x="0" y="0" width="12" height="14" fill="#e6e9ec"/><rect x="0" y="0" width="12" height="1.1" fill="#d6d6d6"/><rect x="0" y="1.1" width="12" height="0.7" fill="#f1ebe0"/>
<rect x="0" y="2" width="12" height="1.2" fill="#3b73c6"/><rect x="0" y="5" width="12" height="1.2" fill="#f5811e"/><rect x="0" y="8" width="12" height="1.2" fill="#3b73c6"/>
<rect x="0" y="9.4" width="12" height="0.7" fill="#f1ebe0"/><rect x="0" y="10" width="12" height="4" fill="#d8d8d8"/><rect x="4.9" y="11" width="2.1" height="1.1" rx="0.5" fill="#f5a04a"/></svg>
<svg class="abs" style="left:529.6px;top:703.3px" width="10" height="10" viewBox="0 0 10 10"><defs><linearGradient id="g28" x1="0" y1="0" x2="0" y2="1"><stop offset="0" stop-color="#f8d4d4"/><stop offset="1" stop-color="#dddada"/></linearGradient></defs><circle cx="5" cy="5" r="4.1" fill="url(#g28)" stroke="#c4a3a3" stroke-width="0.9"/></svg>
<svg class="abs" style="left:529.6px;top:731.1px" width="10" height="10" viewBox="0 0 10 10"><defs><linearGradient id="g29" x1="0" y1="0" x2="0" y2="1"><stop offset="0" stop-color="#f8d4d4"/><stop offset="1" stop-color="#dddada"/></linearGradient></defs><circle cx="5" cy="5" r="4.1" fill="url(#g29)" stroke="#c4a3a3" stroke-width="0.9"/></svg>
<svg class="abs" style="left:773.2px;top:700.4px" width="23" height="15" viewBox="0 0 23 15"><defs><filter id="g30" x="-10%" y="-10%" width="120%" height="120%"><feGaussianBlur stdDeviation="0.35"/></filter></defs>
<path d="M4.8 13.2 C0.6 13.4 0 8.6 2.6 7.4 C2.8 4 7 2.8 9.4 4.6 C10.6 -0.2 19 -0.4 20 5.6 C22 7 21.8 12.4 18.4 13 C16 13.8 13.6 13.6 12.4 12.8 C10.4 14 7 14 4.8 13.2 Z" fill="#e9f0fb" stroke="#bdd0ee" stroke-width="1" filter="url(#g30)"/>
<text x="12.1" y="10.7" font-family="Liberation Sans, sans-serif" font-size="6.8" font-weight="bold" fill="#1c4fa8" text-anchor="middle" letter-spacing="0.2">DNS</text></svg>
<svg class="abs" style="left:441px;top:701px" width="12" height="14" viewBox="0 0 12 14"><defs><linearGradient id="g31" x1="0" x2="1"><stop offset="0" stop-color="#ececec"/><stop offset="0.5" stop-color="#f4f4f4"/><stop offset="1" stop-color="#e6e6e6"/></linearGradient>
<linearGradient id="g32" x1="0" x2="0" y1="0" y2="1"><stop offset="0" stop-color="#f6f6f6"/><stop offset="1" stop-color="#efefef"/></linearGradient></defs>
<path d="M2.5 7.4 V3.8 C2.5 0.3 9.5 0.3 9.5 3.8 V7.4" fill="none" stroke="url(#g31)" stroke-width="2.3"/>
<rect x="0.5" y="7.3" width="11" height="6.2" fill="url(#g32)" stroke="#e9e9e9" stroke-width="1"/><rect x="1.6" y="9.2" width="8.8" height="2.6" fill="#fafafa" opacity="0.55"/><rect x="6.6" y="9.2" width="1" height="2.6" fill="#e9e9e9" opacity="0.35"/></svg>
<svg class="abs" style="left:458px;top:701px" width="12" height="14" viewBox="0 0 12 14"><defs><linearGradient id="g33" x1="0" x2="1"><stop offset="0" stop-color="#ececec"/><stop offset="0.5" stop-color="#f4f4f4"/><stop offset="1" stop-color="#e6e6e6"/></linearGradient>
<linearGradient id="g34" x1="0" x2="0" y1="0" y2="1"><stop offset="0" stop-color="#f6f6f6"/><stop offset="1" stop-color="#efefef"/></linearGradient></defs>
<path d="M2.5 7.4 V3.8 C2.5 0.3 9.5 0.3 9.5 3.8 V7.4" fill="none" stroke="url(#g33)" stroke-width="2.3"/>
<rect x="0.5" y="7.3" width="11" height="6.2" fill="url(#g34)" stroke="#e9e9e9" stroke-width="1"/><path d="M1.9 10.4 H8 M6.5 8.5 L9.2 10.4 L6.5 12.3 Z" stroke="#dcdcdc" stroke-width="0.9" fill="#dcdcdc" stroke-linejoin="miter"/></svg>
<svg class="abs" style="left:474px;top:701px" width="14" height="14" viewBox="0 0 14 14"><circle cx="7" cy="7" r="6.4" fill="#ececec" stroke="#e4e4e4" stroke-width="0.8"/><path d="M7 3.2 V7.4 H9.6" fill="none" stroke="#fff" stroke-width="1.3"/></svg>
<svg class="abs" style="left:488px;top:698px" width="22" height="20" viewBox="0 0 22 20"><g fill="#7dca43" stroke="#3c8718" stroke-width="0.7" stroke-linejoin="round">
<path d="M4.4 5.4 H9.7 V10.3 L8.7 9.5 L7.1 11 V12.2 L8.3 13.6 L9.3 14.4 L7.4 14.6 L5.5 12.9 L4.4 11.3 V8.4 L5.7 6.5 L4.4 6 Z"/>
<path d="M11.3 6.3 L13.5 6.2 L15.3 7.9 L16.7 9.5 V12.5 L15.7 13.9 L16.7 15.5 H11.3 V10.6 L12.3 11.4 L13.7 10.2 V8.8 L12.6 7.3 Z"/></g><path d="M6.3 6.6 L5.4 8.4 V10.2" stroke="#d9f5c0" stroke-width="0.9" fill="none"/><path d="M12.6 13.8 V12.4 L13.8 11.4" stroke="#d9f5c0" stroke-width="0.9" fill="none"/></svg>
<svg class="abs" style="left:441.7px;top:729px" width="13" height="14" viewBox="0 0 13 14"><rect x="2" y="0.5" width="8.4" height="12" fill="#fff" stroke="#e6e6e6" stroke-width="1"/><rect x="3.2" y="9" width="6" height="3.2" fill="#e6e6e6"/><rect x="0.4" y="12.2" width="11.6" height="1.2" fill="#e6e6e6"/></svg>
<svg class="abs" style="left:457px;top:729px" width="14" height="14" viewBox="0 0 14 14"><circle cx="7" cy="7" r="6.3" fill="#fff" stroke="#e9e9e9" stroke-width="1"/><circle cx="7" cy="7" r="5.1" fill="#e6e6e6"/><text x="7" y="9" font-family="Liberation Sans, sans-serif" font-size="5.6" font-weight="bold" fill="#fff" text-anchor="middle" letter-spacing="-0.2">STP</text></svg>
<svg class="abs" style="left:475px;top:729px" width="12" height="14" viewBox="0 0 12 14"><defs><linearGradient id="g35" x1="0" y1="0" x2="1" y2="1"><stop offset="0" stop-color="#2f6fe0"/><stop offset="0.5" stop-color="#5d97ee"/><stop offset="1" stop-color="#b5d0f8"/></linearGradient></defs>
<rect x="0.5" y="0.5" width="11" height="12.6" rx="1" fill="#fff" stroke="#4a67a8"/><rect x="1.8" y="1.8" width="8.4" height="10" fill="url(#g35)"/><path d="M3.8 3.4 H7.4 C9.6 3.4 9.6 7.4 7.4 7.4 H5.5 V10.4 H3.8 Z M5.5 4.7 V6.1 H7 C7.8 6.1 7.8 4.7 7 4.7 Z" fill="#fff" fill-rule="evenodd"/></svg>
<svg class="abs" style="left:488px;top:726.2px" width="22" height="20" viewBox="0 0 22 20"><g fill="#e9e9e9" stroke="#e3e3e3" stroke-width="0.7" stroke-linejoin="round">
<path d="M4.4 5.4 H9.7 V10.3 L8.7 9.5 L7.1 11 V12.2 L8.3 13.6 L9.3 14.4 L7.4 14.6 L5.5 12.9 L4.4 11.3 V8.4 L5.7 6.5 L4.4 6 Z"/>
<path d="M11.3 6.3 L13.5 6.2 L15.3 7.9 L16.7 9.5 V12.5 L15.7 13.9 L16.7 15.5 H11.3 V10.6 L12.3 11.4 L13.7 10.2 V8.8 L12.6 7.3 Z"/></g></svg>
<svg class="abs" style="left:867px;top:495px" width="16" height="16" viewBox="0 0 16 16"><defs><radialGradient id="g36" cx="0.35" cy="0.4" r="0.8"><stop offset="0" stop-color="#2a9ae8"/><stop offset="0.6" stop-color="#1668d0"/><stop offset="1" stop-color="#0b349a"/></radialGradient>
<linearGradient id="g37" x1="0" y1="0" x2="0" y2="1"><stop offset="0" stop-color="#5a5a5a"/><stop offset="0.6" stop-color="#1a1a1a"/><stop offset="1" stop-color="#000"/></linearGradient>
<clipPath id="g38"><circle cx="8" cy="8" r="7"/></clipPath></defs>
<circle cx="8" cy="8" r="7" fill="url(#g36)"/>
<g clip-path="url(#g38)" fill="#8ee23c"><path d="M2 2 L6 0.5 L4 4 L1.6 6 L0.6 5 Z"/><path d="M11 0.6 L15 3.4 L15.6 8 L14.4 12.6 L11.6 13 L11.4 9 L11.8 5 L13 4 Z"/><path d="M1.8 9.4 L4.6 10.6 L5.2 12.6 L3.4 13.6 L1.6 11.6 Z"/></g>
<path d="M8 0.9 L11.9 4.7 H10 V8.8 H6 V4.7 H4.1 Z" fill="#fff" stroke="#fff" stroke-width="2.2" stroke-linejoin="round"/>
<path d="M8 0.9 L11.9 4.7 H10 V8.8 H6 V4.7 H4.1 Z" fill="url(#g37)"/></svg>
<svg class="abs" style="left:958px;top:496px" width="14" height="14" viewBox="0 0 14 14"><defs><clipPath id="g39"><circle cx="7" cy="7" r="5.4"/></clipPath></defs><circle cx="7" cy="7" r="5.5" fill="#fff" stroke="#2680f5" stroke-width="1.25"/><circle cx="6.9" cy="5" r="1.95" fill="#2680f5"/><ellipse cx="6.9" cy="12.2" rx="5.2" ry="4.2" fill="#2680f5" clip-path="url(#g39)"/></svg>
<svg class="abs" style="left:867px;top:599px" width="16" height="16" viewBox="0 0 16 16"><defs><radialGradient id="g40" cx="0.35" cy="0.4" r="0.8"><stop offset="0" stop-color="#2a9ae8"/><stop offset="0.6" stop-color="#1668d0"/><stop offset="1" stop-color="#0b349a"/></radialGradient>
<linearGradient id="g41" x1="0" y1="0" x2="0" y2="1"><stop offset="0" stop-color="#5a5a5a"/><stop offset="0.6" stop-color="#1a1a1a"/><stop offset="1" stop-color="#000"/></linearGradient>
<clipPath id="g42"><circle cx="8" cy="8" r="7"/></clipPath></defs>
<circle cx="8" cy="8" r="7" fill="url(#g40)"/>
<g clip-path="url(#g42)" fill="#8ee23c"><path d="M2 2 L6 0.5 L4 4 L1.6 6 L0.6 5 Z"/><path d="M11 0.6 L15 3.4 L15.6 8 L14.4 12.6 L11.6 13 L11.4 9 L11.8 5 L13 4 Z"/><path d="M1.8 9.4 L4.6 10.6 L5.2 12.6 L3.4 13.6 L1.6 11.6 Z"/></g>
<path d="M8 0.9 L11.9 4.7 H10 V8.8 H6 V4.7 H4.1 Z" fill="#fff" stroke="#fff" stroke-width="2.2" stroke-linejoin="round"/>
<path d="M8 0.9 L11.9 4.7 H10 V8.8 H6 V4.7 H4.1 Z" fill="url(#g41)"/></svg>
<svg class="abs" style="left:958px;top:600px" width="14" height="14" viewBox="0 0 14 14"><defs><clipPath id="g43"><circle cx="7" cy="7" r="5.4"/></clipPath></defs><circle cx="7" cy="7" r="5.5" fill="#fff" stroke="#2680f5" stroke-width="1.25"/><circle cx="6.9" cy="5" r="1.95" fill="#2680f5"/><ellipse cx="6.9" cy="12.2" rx="5.2" ry="4.2" fill="#2680f5" clip-path="url(#g43)"/></svg>
<svg class="abs" style="left:958px;top:704px" width="14" height="14" viewBox="0 0 14 14"><defs><clipPath id="g44"><circle cx="7" cy="7" r="5.4"/></clipPath></defs><circle cx="7" cy="7" r="5.5" fill="#fff" stroke="#2680f5" stroke-width="1.25"/><circle cx="6.9" cy="5" r="1.95" fill="#2680f5"/><ellipse cx="6.9" cy="12.2" rx="5.2" ry="4.2" fill="#2680f5" clip-path="url(#g44)"/></svg>
<svg class="abs" style="left:899px;top:701.1px" width="22" height="20" viewBox="0 0 22 20"><g fill="#7dca43" stroke="#3c8718" stroke-width="0.7" stroke-linejoin="round">
<path d="M4.4 5.4 H9.7 V10.3 L8.7 9.5 L7.1 11 V12.2 L8.3 13.6 L9.3 14.4 L7.4 14.6 L5.5 12.9 L4.4 11.3 V8.4 L5.7 6.5 L4.4 6 Z"/>
<path d="M11.3 6.3 L13.5 6.2 L15.3 7.9 L16.7 9.5 V12.5 L15.7 13.9 L16.7 15.5 H11.3 V10.6 L12.3 11.4 L13.7 10.2 V8.8 L12.6 7.3 Z"/></g><path d="M6.3 6.6 L5.4 8.4 V10.2" stroke="#d9f5c0" stroke-width="0.9" fill="none"/><path d="M12.6 13.8 V12.4 L13.8 11.4" stroke="#d9f5c0" stroke-width="0.9" fill="none"/></svg>
<svg class="abs" style="left:907px;top:522.2px" width="11" height="12" viewBox="0 0 11 12"><path d="M5.5 0.8 L9.9 5.6 H8.7 V10.6 H3.3 V5.6 H1.1 Z" fill="#e8f3ff"/><path d="M5.6 0.8 L9.9 5.4 H8.8 V10.6 H3.6" fill="none" stroke="#c2cbea" stroke-width="0.9"/><path d="M5.6 0.8 L1.2 5.8 M3.2 6 V10.6" fill="none" stroke="#4359ac" stroke-width="1.05"/><path d="M3.2 10.5 H8.6" stroke="#8fa0d8" stroke-width="0.9"/></svg>
<svg class="abs" style="left:907px;top:728.7px" width="11" height="12" viewBox="0 0 11 12"><path d="M5.5 0.8 L9.9 5.6 H8.7 V10.6 H3.3 V5.6 H1.1 Z" fill="#e8f3ff"/><path d="M5.6 0.8 L9.9 5.4 H8.8 V10.6 H3.6" fill="none" stroke="#c2cbea" stroke-width="0.9"/><path d="M5.6 0.8 L1.2 5.8 M3.2 6 V10.6" fill="none" stroke="#4359ac" stroke-width="1.05"/><path d="M3.2 10.5 H8.6" stroke="#8fa0d8" stroke-width="0.9"/></svg>
<svg class="abs" style="left:949.1px;top:622px" width="22" height="20" viewBox="0 0 22 20"><g fill="#7dca43" stroke="#3c8718" stroke-width="0.7" stroke-linejoin="round">
<path d="M4.4 5.4 H9.7 V10.3 L8.7 9.5 L7.1 11 V12.2 L8.3 13.6 L9.3 14.4 L7.4 14.6 L5.5 12.9 L4.4 11.3 V8.4 L5.7 6.5 L4.4 6 Z"/>
<path d="M11.3 6.3 L13.5 6.2 L15.3 7.9 L16.7 9.5 V12.5 L15.7 13.9 L16.7 15.5 H11.3 V10.6 L12.3 11.4 L13.7 10.2 V8.8 L12.6 7.3 Z"/></g><path d="M6.3 6.6 L5.4 8.4 V10.2" stroke="#d9f5c0" stroke-width="0.9" fill="none"/><path d="M12.6 13.8 V12.4 L13.8 11.4" stroke="#d9f5c0" stroke-width="0.9" fill="none"/></svg>
<svg class="abs" style="left:812.5px;top:769.8px" width="12.4" height="12.6" viewBox="0 0 12.4 12.6"><path d="M3 0.4 H10.2 L12.2 8 H0.2 Z" fill="#333"/><path d="M5 0 H7.5 V3.8 H9.2 L6.25 7.4 L3.3 3.8 H5 Z" fill="#fff"/><path d="M0.7 9.4 C0.9 11.2 1.6 11.6 2.6 11.6 H9.8 C10.8 11.6 11.5 11.2 11.7 9.4" fill="none" stroke="#333" stroke-width="1.3"/></svg>
</div>
</body></html>
